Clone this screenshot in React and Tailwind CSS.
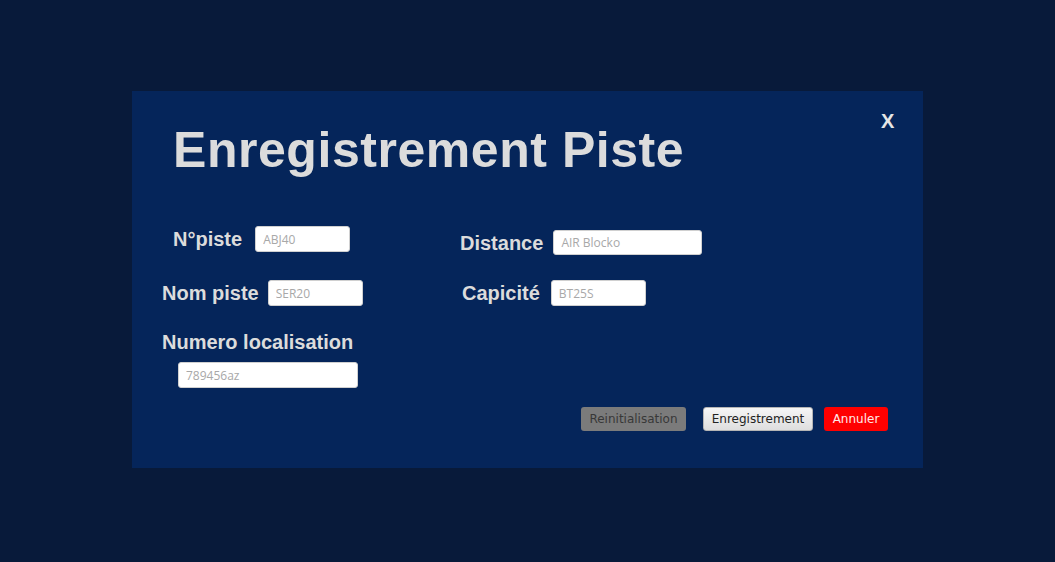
import React from "react";

function Field({ placeholder, className }) {
  return (
    <input
      type="text"
      placeholder={placeholder}
      className={
        "bg-white rounded-[3px] border border-[#d0d0d0] pl-[7px] text-[12px] text-[#333] placeholder:text-[#a8a8a8] outline-none " +
        className
      }
      style={{ fontFamily: '"Open Sans", sans-serif' }}
    />
  );
}

export default function App() {
  const label = "text-[20px] font-bold text-[#dcdcdc] leading-[24px] whitespace-nowrap";
  return (
    <div
      className="w-full h-[562px] bg-[#081a3a] flex flex-col items-start pl-[132px] pt-[91px]"
      style={{ fontFamily: '"Liberation Sans", Arial, sans-serif' }}
    >
      <div className="relative w-[791px] h-[377px] bg-[#05255a] flex flex-col">
        <button className="absolute left-[749px] top-[18px] text-[20px] font-bold text-[#e6e6e6] leading-[24px]">
          X
        </button>
        <h1 className="pt-[34px] pl-[41px] text-[50px] leading-[50px] font-bold text-[#dcdcdc] tracking-[0.55px]">
          Enregistrement Piste
        </h1>

        <div className="flex mt-[51px] pl-[30px]">
          <div className="flex flex-col w-[298px]">
            <div className="flex items-center pl-[11px] h-[26px]">
              <span className={label}>N°piste</span>
              <Field placeholder="ABJ40" className="ml-[13px] w-[95px] h-[26px]" />
            </div>
            <div className="flex items-center mt-[28px] h-[26px]">
              <span className={label}>Nom piste</span>
              <Field placeholder="SER20" className="ml-[9px] w-[95px] h-[26px]" />
            </div>
            <span className={label + " mt-[24px]"}>Numero localisation</span>
            <Field placeholder="789456az" className="mt-[8px] ml-[16px] w-[180px] h-[26px]" />
          </div>
          <div className="flex flex-col pt-[4px]">
            <div className="flex items-center h-[25px]">
              <span className={label}>Distance</span>
              <Field placeholder="AIR Blocko" className="ml-[10px] w-[149px] h-[25px]" />
            </div>
            <div className="flex items-center mt-[25px] pl-[2px] h-[26px]">
              <span className={label}>Capicité</span>
              <Field placeholder="BT25S" className="ml-[11px] w-[95px] h-[26px]" />
            </div>
          </div>
        </div>

        <div
          className="flex justify-end pr-[35px] mt-[19px] text-[12px]"
          style={{ fontFamily: '"DejaVu Sans", Verdana, sans-serif' }}
        >
          <button className="w-[105px] h-[24px] rounded-[3px] bg-[#7b7b7b] text-[#383838] flex items-center justify-center">
            Reinitialisation
          </button>
          <button className="ml-[17px] w-[110px] h-[24px] rounded-[3px] bg-gradient-to-b from-[#f6f6f6] to-[#dedede] border border-[#b5b5b5] text-[#222] flex items-center justify-center">
            Enregistrement
          </button>
          <button className="ml-[11px] w-[64px] h-[24px] rounded-[3px] bg-[#ff0000] text-[#ffe8e8] flex items-center justify-center">
            Annuler
          </button>
        </div>
      </div>
    </div>
  );
}
